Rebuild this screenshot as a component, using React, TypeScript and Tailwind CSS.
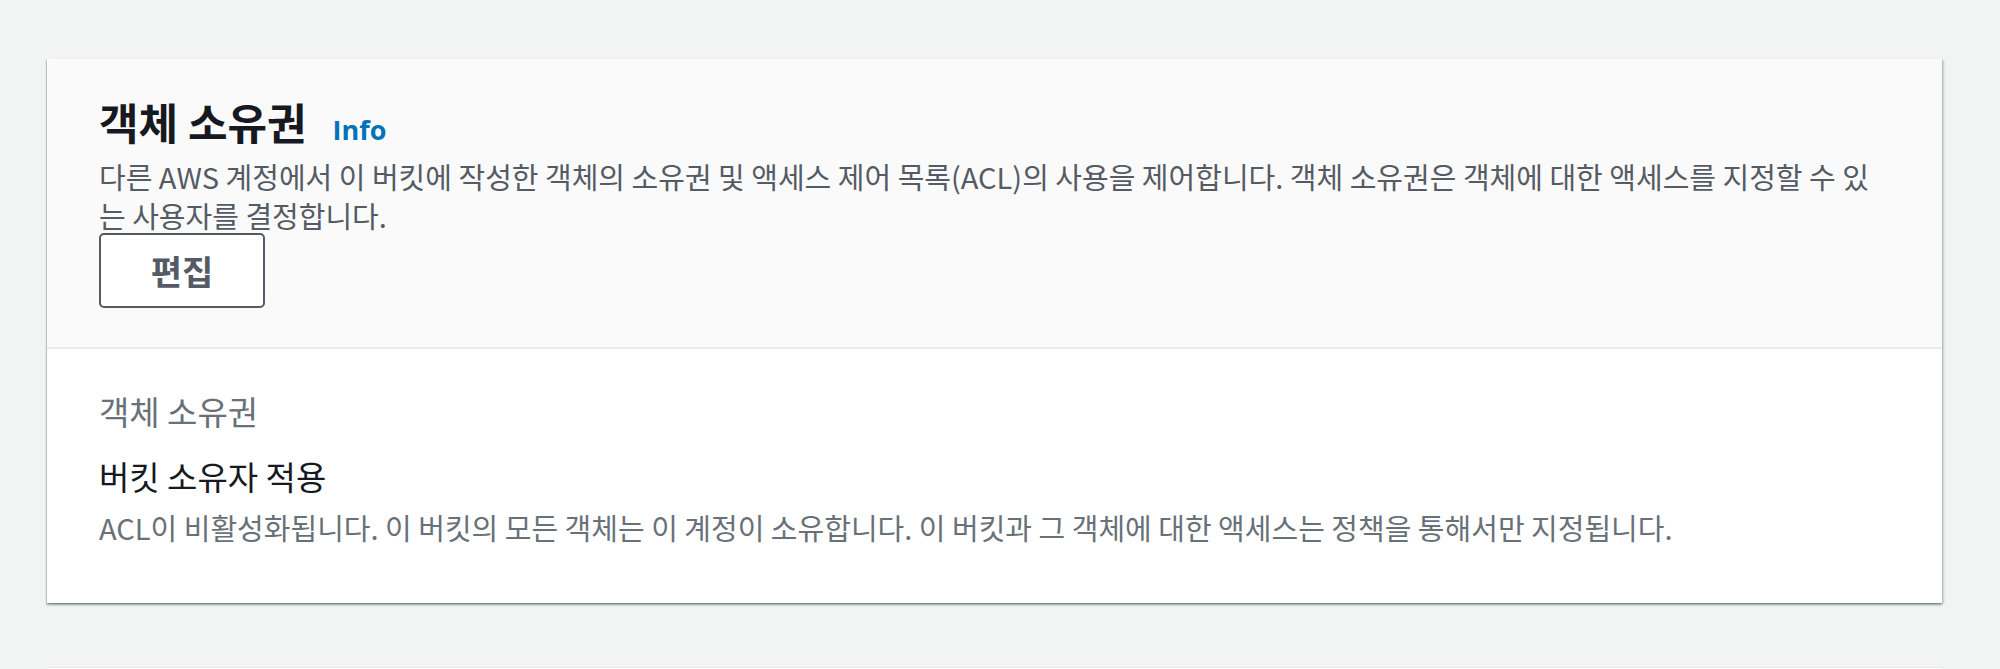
const FONT = '"Noto Sans CJK KR", "Noto Sans", sans-serif'

function ObjectOwnershipPanel() {
  return (
    <section className="bg-white shadow-[0_2px_2px_0_rgba(0,28,36,0.35),2px_1px_2px_0_rgba(0,28,36,0.15),-1px_1px_1px_0_rgba(0,28,36,0.12)]">
      <header className="bg-[#fafafa] border-b-2 border-[#eaeded] px-[52px] pt-[32px] pb-[39px]">
        <div className="flex items-baseline gap-[26px] h-[60px]">
          <h2 className="text-[43px] leading-[60px] font-bold text-[#16191f]">
            객체 소유권
          </h2>
          <a className="text-[27px] font-bold text-[#0073bb]" style={{ fontFamily: '"Open Sans", sans-serif' }}>
            Info
          </a>
        </div>
        <p className="mt-[6px] text-[29px] leading-[39px] text-[#545b64]">
          다른 AWS 계정에서 이 버킷에 작성한 객체의 소유권 및 액세스 제어 목록(ACL)의 사용을 제어합니다. 객체 소유권은 객체에 대한 액세스를 지정할 수 있는 사용자를 결정합니다.
        </p>
        <button className="mt-[-2px] w-[166px] h-[75px] rounded-[5px] border-2 border-[#545b64] bg-white text-[34px] font-bold text-[#545b64]">
          편집
        </button>
      </header>
      <div className="px-[52px] pt-[40px] pb-[56px]">
        <div className="text-[33px] leading-[44px] text-[#687078]">객체 소유권</div>
        <div className="mt-[21px] text-[33px] leading-[44px] text-[#16191f]">버킷 소유자 적용</div>
        <div className="mt-[9px] text-[29px] leading-[40px] text-[#687078]">
          ACL이 비활성화됩니다. 이 버킷의 모든 객체는 이 계정이 소유합니다. 이 버킷과 그 객체에 대한 액세스는 정책을 통해서만 지정됩니다.
        </div>
      </div>
    </section>
  )
}

export default function App() {
  return (
    <div className="min-h-screen bg-[#f2f3f3] pl-[47px] pr-[58px] pt-[59px]" style={{ fontFamily: FONT }}>
      <ObjectOwnershipPanel />
      <section className="mt-[64px] h-[200px] bg-white border-t border-[#e4e7e7]" />
    </div>
  )
}
